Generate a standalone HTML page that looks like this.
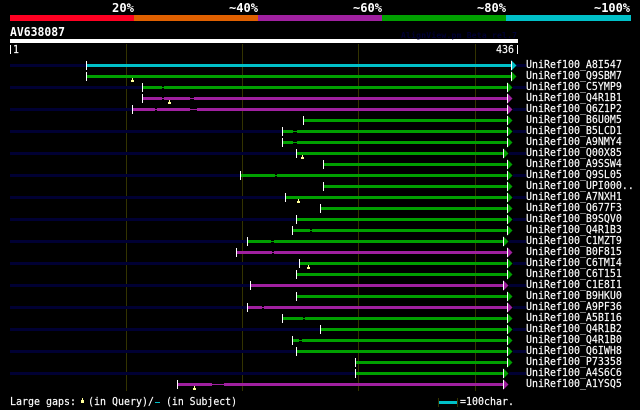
<!DOCTYPE html>
<html><head><meta charset="utf-8"><style>
html,body{margin:0;padding:0;background:#000;width:640px;height:410px;overflow:hidden}
svg{display:block}
text{font-family:"DejaVu Sans Mono","Liberation Mono",monospace;fill:#fff;font-size:11px;stroke:#fff;stroke-width:.15px}
.b{font-weight:bold;font-size:12px;stroke:none}
</style></head><body>
<svg width="640" height="410" viewBox="0 0 640 410" xmlns="http://www.w3.org/2000/svg">
<g shape-rendering="crispEdges">
<rect width="640" height="410" fill="#000"/>
<rect x="10" y="15" width="124" height="6" fill="#ff0022"/>
<rect x="134" y="15" width="124" height="6" fill="#e06000"/>
<rect x="258" y="15" width="124" height="6" fill="#a020a0"/>
<rect x="382" y="15" width="124" height="6" fill="#00a000"/>
<rect x="506" y="15" width="125" height="6" fill="#00c0c8"/>
<rect x="10" y="39" width="508" height="4" fill="#fff"/>
<rect x="10" y="45" width="1" height="9" fill="#fff"/>
<rect x="517" y="45" width="1" height="9" fill="#fff"/>
<g fill="#333300">
<rect x="126" y="44" width="1" height="347"/><rect x="242" y="44" width="1" height="347"/><rect x="358" y="44" width="1" height="347"/><rect x="475" y="44" width="1" height="347"/>
</g>
<g fill="#000033">
<rect x="10" y="64" width="76" height="3"/><rect x="516" y="64" width="10" height="3"/>
<rect x="10" y="86" width="132" height="3"/><rect x="513" y="86" width="13" height="3"/>
<rect x="10" y="108" width="122" height="3"/><rect x="513" y="108" width="13" height="3"/>
<rect x="10" y="130" width="272" height="3"/><rect x="513" y="130" width="13" height="3"/>
<rect x="10" y="152" width="286" height="3"/><rect x="509" y="152" width="17" height="3"/>
<rect x="10" y="174" width="230" height="3"/><rect x="513" y="174" width="13" height="3"/>
<rect x="10" y="196" width="275" height="3"/><rect x="513" y="196" width="13" height="3"/>
<rect x="10" y="218" width="286" height="3"/><rect x="513" y="218" width="13" height="3"/>
<rect x="10" y="240" width="237" height="3"/><rect x="509" y="240" width="17" height="3"/>
<rect x="10" y="262" width="289" height="3"/><rect x="513" y="262" width="13" height="3"/>
<rect x="10" y="284" width="240" height="3"/><rect x="509" y="284" width="17" height="3"/>
<rect x="10" y="306" width="237" height="3"/><rect x="513" y="306" width="13" height="3"/>
<rect x="10" y="328" width="310" height="3"/><rect x="513" y="328" width="13" height="3"/>
<rect x="10" y="350" width="286" height="3"/><rect x="513" y="350" width="13" height="3"/>
<rect x="10" y="372" width="345" height="3"/><rect x="509" y="372" width="17" height="3"/>
</g>
<rect x="86" y="64" width="425" height="3" fill="#00c0c8"/>
<g fill="#00a000">
<rect x="86" y="75" width="425" height="3"/>
<rect x="142" y="86" width="365" height="3"/>
<rect x="303" y="119" width="204" height="3"/>
<rect x="282" y="130" width="225" height="3"/>
<rect x="282" y="141" width="225" height="3"/>
<rect x="296" y="152" width="207" height="3"/>
<rect x="323" y="163" width="184" height="3"/>
<rect x="240" y="174" width="267" height="3"/>
<rect x="323" y="185" width="184" height="3"/>
<rect x="285" y="196" width="222" height="3"/>
<rect x="320" y="207" width="187" height="3"/>
<rect x="296" y="218" width="211" height="3"/>
<rect x="292" y="229" width="215" height="3"/>
<rect x="247" y="240" width="256" height="3"/>
<rect x="299" y="262" width="208" height="3"/>
<rect x="296" y="273" width="211" height="3"/>
<rect x="296" y="295" width="211" height="3"/>
<rect x="282" y="317" width="225" height="3"/>
<rect x="320" y="328" width="187" height="3"/>
<rect x="292" y="339" width="215" height="3"/>
<rect x="296" y="350" width="211" height="3"/>
<rect x="355" y="361" width="152" height="3"/>
<rect x="355" y="372" width="148" height="3"/>
</g>
<g fill="#a020a0">
<rect x="142" y="97" width="365" height="3"/>
<rect x="132" y="108" width="375" height="3"/>
<rect x="236" y="251" width="271" height="3"/>
<rect x="250" y="284" width="253" height="3"/>
<rect x="247" y="306" width="260" height="3"/>
<rect x="177" y="383" width="326" height="3"/>
</g>
<path fill="#000" d="M162 86h2v1h-2zM162 88h2v1h-2zM162 97h2v1h-2zM162 99h2v1h-2zM190 97h4v1h-4zM190 99h4v1h-4zM155 108h2v1h-2zM155 110h2v1h-2zM190 108h7v1h-7zM190 110h7v1h-7zM293 130h4v1h-4zM293 132h4v1h-4zM293 141h4v1h-4zM293 143h4v1h-4zM275 174h2v1h-2zM275 176h2v1h-2zM310 229h2v1h-2zM310 231h2v1h-2zM271 240h3v1h-3zM271 242h3v1h-3zM272 251h2v1h-2zM272 253h2v1h-2zM262 306h2v1h-2zM262 308h2v1h-2zM303 317h2v1h-2zM303 319h2v1h-2zM299 339h3v1h-3zM299 341h3v1h-3zM212 383h12v1h-12zM212 385h12v1h-12z"/>
<path fill="#fff" d="M86 61h1v9h-1zM86 72h1v9h-1zM142 83h1v9h-1zM142 94h1v9h-1zM132 105h1v9h-1zM303 116h1v9h-1zM282 127h1v9h-1zM282 138h1v9h-1zM296 149h1v9h-1zM323 160h1v9h-1zM240 171h1v9h-1zM323 182h1v9h-1zM285 193h1v9h-1zM320 204h1v9h-1zM296 215h1v9h-1zM292 226h1v9h-1zM247 237h1v9h-1zM236 248h1v9h-1zM299 259h1v9h-1zM296 270h1v9h-1zM250 281h1v9h-1zM296 292h1v9h-1zM247 303h1v9h-1zM282 314h1v9h-1zM320 325h1v9h-1zM292 336h1v9h-1zM296 347h1v9h-1zM355 358h1v9h-1zM355 369h1v9h-1zM177 380h1v9h-1z"/>
<path fill="#ffff99" d="M132 78h1v2h-1zM131 80h3v2h-3zM169 100h1v2h-1zM168 102h3v2h-3zM302 155h1v2h-1zM301 157h3v2h-3zM298 199h1v2h-1zM297 201h3v2h-3zM308 265h1v2h-1zM307 267h3v2h-3zM194 386h1v2h-1zM193 388h3v2h-3zM82 398h1v2h-1zM81 400h3v3h-3z"/>
<rect x="155" y="402" width="5" height="1" fill="#00c0c8"/>
<rect x="439" y="401" width="18" height="3" fill="#00c0c8"/>
<rect x="438" y="398" width="1" height="9" fill="#333300"/>
<rect x="457" y="398" width="1" height="9" fill="#333300"/>
</g>
<g fill="#00c0c8"><path d="M511 60L516.5 65.5L511 71z"/></g>
<g fill="#00a000">
<path d="M511 71L516.5 76.5L511 82z"/>
<path d="M507 82L512.5 87.5L507 93z"/>
<path d="M507 115L512.5 120.5L507 126z"/>
<path d="M507 126L512.5 131.5L507 137z"/>
<path d="M507 137L512.5 142.5L507 148z"/>
<path d="M503 148L508.5 153.5L503 159z"/>
<path d="M507 159L512.5 164.5L507 170z"/>
<path d="M507 170L512.5 175.5L507 181z"/>
<path d="M507 181L512.5 186.5L507 192z"/>
<path d="M507 192L512.5 197.5L507 203z"/>
<path d="M507 203L512.5 208.5L507 214z"/>
<path d="M507 214L512.5 219.5L507 225z"/>
<path d="M507 225L512.5 230.5L507 236z"/>
<path d="M503 236L508.5 241.5L503 247z"/>
<path d="M507 258L512.5 263.5L507 269z"/>
<path d="M507 269L512.5 274.5L507 280z"/>
<path d="M507 291L512.5 296.5L507 302z"/>
<path d="M507 313L512.5 318.5L507 324z"/>
<path d="M507 324L512.5 329.5L507 335z"/>
<path d="M507 335L512.5 340.5L507 346z"/>
<path d="M507 346L512.5 351.5L507 357z"/>
<path d="M507 357L512.5 362.5L507 368z"/>
<path d="M503 368L508.5 373.5L503 379z"/>
</g>
<g fill="#a020a0">
<path d="M507 93L512.5 98.5L507 104z"/>
<path d="M507 104L512.5 109.5L507 115z"/>
<path d="M507 247L512.5 252.5L507 258z"/>
<path d="M503 280L508.5 285.5L503 291z"/>
<path d="M507 302L512.5 307.5L507 313z"/>
<path d="M503 379L508.5 384.5L503 390z"/>
</g>
<g fill="#fff" shape-rendering="crispEdges">
<path d="M511 61h1v9h-1zM511 72h1v9h-1zM507 83h1v9h-1zM507 94h1v9h-1zM507 105h1v9h-1zM507 116h1v9h-1zM507 127h1v9h-1zM507 138h1v9h-1zM503 149h1v9h-1zM507 160h1v9h-1zM507 171h1v9h-1zM507 182h1v9h-1zM507 193h1v9h-1zM507 204h1v9h-1zM507 215h1v9h-1zM507 226h1v9h-1zM503 237h1v9h-1zM507 248h1v9h-1zM507 259h1v9h-1zM507 270h1v9h-1zM503 281h1v9h-1zM507 292h1v9h-1zM507 303h1v9h-1zM507 314h1v9h-1zM507 325h1v9h-1zM507 336h1v9h-1zM507 347h1v9h-1zM507 358h1v9h-1zM503 369h1v9h-1zM503 380h1v9h-1z"/>
</g>
<text class="b" x="112" y="12" textLength="22" lengthAdjust="spacingAndGlyphs">20%</text>
<text class="b" x="229" y="12" textLength="29" lengthAdjust="spacingAndGlyphs">~40%</text>
<text class="b" x="353" y="12" textLength="29" lengthAdjust="spacingAndGlyphs">~60%</text>
<text class="b" x="477" y="12" textLength="29" lengthAdjust="spacingAndGlyphs">~80%</text>
<text class="b" x="594" y="12" textLength="36" lengthAdjust="spacingAndGlyphs">~100%</text>
<text class="b" x="10" y="36" textLength="55" lengthAdjust="spacingAndGlyphs">AV638087</text>
<text x="401" y="38" textLength="116" style="fill:#000033;stroke:none;font-size:8px;font-weight:bold">AlignView.pm Beta rel.7</text>
<text x="13" y="53" textLength="6" lengthAdjust="spacingAndGlyphs">1</text>
<text x="496" y="53" textLength="18" lengthAdjust="spacingAndGlyphs">436</text>
<g transform="translate(526 0) scale(.906 1)">
<text y="68">UniRef100_A8I547</text>
<text y="79">UniRef100_Q9SBM7</text>
<text y="90">UniRef100_C5YMP9</text>
<text y="101">UniRef100_Q4R1B1</text>
<text y="112">UniRef100_Q6Z1P2</text>
<text y="123">UniRef100_B6U0M5</text>
<text y="134">UniRef100_B5LCD1</text>
<text y="145">UniRef100_A9NMY4</text>
<text y="156">UniRef100_Q00X85</text>
<text y="167">UniRef100_A9SSW4</text>
<text y="178">UniRef100_Q9SL05</text>
<text y="189">UniRef100_UPI000..</text>
<text y="200">UniRef100_A7NXH1</text>
<text y="211">UniRef100_Q677F3</text>
<text y="222">UniRef100_B9SQV0</text>
<text y="233">UniRef100_Q4R1B3</text>
<text y="244">UniRef100_C1MZT9</text>
<text y="255">UniRef100_B0F815</text>
<text y="266">UniRef100_C6TMI4</text>
<text y="277">UniRef100_C6T151</text>
<text y="288">UniRef100_C1E8I1</text>
<text y="299">UniRef100_B9HKU0</text>
<text y="310">UniRef100_A9PF36</text>
<text y="321">UniRef100_A5BI16</text>
<text y="332">UniRef100_Q4R1B2</text>
<text y="343">UniRef100_Q4R1B0</text>
<text y="354">UniRef100_Q6IWH8</text>
<text y="365">UniRef100_P73358</text>
<text y="376">UniRef100_A4S6C6</text>
<text y="387">UniRef100_A1YSQ5</text>
</g>
<text x="10" y="405" textLength="66" lengthAdjust="spacingAndGlyphs">Large gaps:</text>
<text x="88" y="405" textLength="66" lengthAdjust="spacingAndGlyphs">(in Query)/</text>
<text x="166" y="405" textLength="71" lengthAdjust="spacingAndGlyphs">(in Subject)</text>
<text x="460" y="405" textLength="54" lengthAdjust="spacingAndGlyphs">=100char.</text>
</svg>
</body></html>
